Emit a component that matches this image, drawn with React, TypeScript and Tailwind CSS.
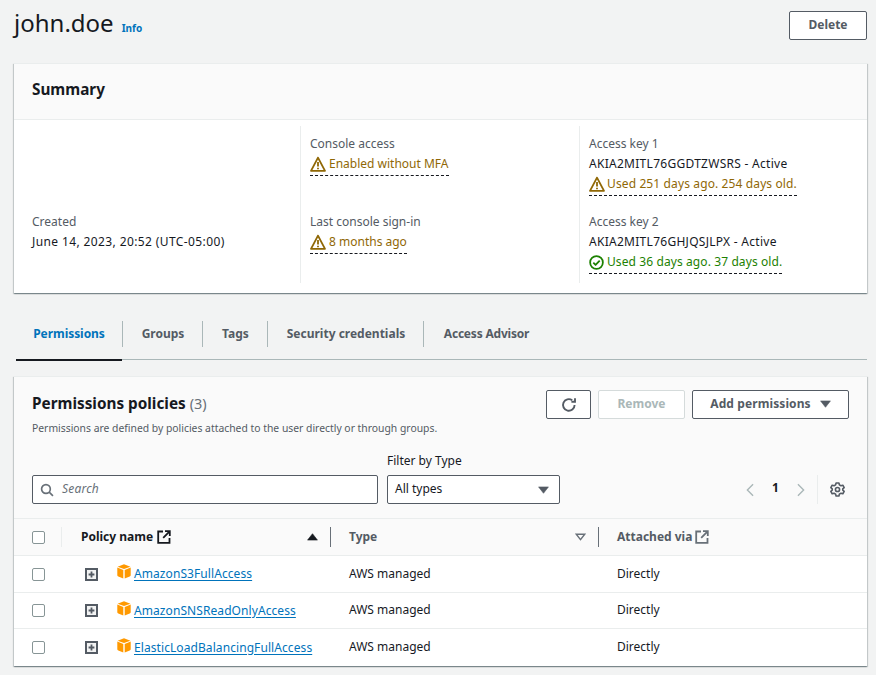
import React from "react";

const Warn = () => (
  <svg viewBox="0 0 16 16" className="w-[16px] h-[16px] shrink-0" fill="none" stroke="#906806" strokeWidth="1.8" strokeLinejoin="round">
    <path d="M8 1.6 1 14.8h14L8 1.6Z" />
    <path d="M8 6v4.4" />
    <path d="M7.1 12.4h1.8" strokeWidth="1.5" />
  </svg>
);

const Ok = () => (
  <svg viewBox="0 0 16 16" className="w-[15px] h-[15px] shrink-0" fill="none" stroke="#1d8102" strokeWidth="1.9">
    <circle cx="8" cy="8" r="6.8" />
    <path d="M4.6 8.2 7 10.6l4.4-4.6" strokeLinejoin="round" />
  </svg>
);

const External = ({ color }: { color: string }) => (
  <svg viewBox="0 0 14 14" className="w-[14px] h-[14px] shrink-0" fill="none" stroke={color} strokeWidth="1.8">
    <path d="M6 1.5H1.2v11.3h11.3V8" />
    <path d="M8 1.2h4.8V6M12.6 1.4 6.2 7.8" />
  </svg>
);

const Cube = () => (
  <svg viewBox="0 0 14 15" className="w-[14px] h-[15px] shrink-0">
    <path d="M7 .3 13.4 2.7 7 5.1.6 2.7 7 .3Z" fill="#ff9900" />
    <path d="M.3 3.6 6.3 5.9v8.6L1.3 12.5A1.4 1.4 0 0 1 .3 11.2V3.6Z" fill="#ff9900" />
    <path d="M13.7 3.6 7.7 5.9v8.6l5-2a1.4 1.4 0 0 0 1-1.3V3.6Z" fill="#ff9900" />
  </svg>
);

const Expand = () => (
  <svg viewBox="0 0 13 13" className="w-[13px] h-[13px] shrink-0">
    <rect x="1" y="1" width="11" height="11" fill="#f2f3f3" stroke="#545b64" strokeWidth="2" />
    <path d="M6.5 3.6v5.8M3.6 6.5h5.8" stroke="#545b64" strokeWidth="1.8" />
  </svg>
);

const Check = () => <span className="block w-[13px] h-[13px] rounded-[2px] border border-[#879596] bg-white" />;

const Caret = ({ color = "#545b64", up = false }: { color?: string; up?: boolean }) => (
  <svg viewBox="0 0 12 8" className="w-[11px] h-[8px] shrink-0">
    <path d={up ? "M.6 7.4h10.8L6 .4.6 7.4Z" : "M.6.6h10.8L6 7.6.6.6Z"} fill={color} stroke={color} strokeWidth="0.6" strokeLinejoin="round" />
  </svg>
);

const Stat = ({ label, children }: { label: string; children: React.ReactNode }) => (
  <div className="h-[78px]">
    <div className="text-[#545b64] leading-[20px]">{label}</div>
    {children}
  </div>
);

const Dashed = ({ tone, gap = "gap-[3px]", children }: { tone: string; gap?: string; children: React.ReactNode }) => (
  <div className={`inline-flex items-center ${gap} h-[22px] pb-[1px] leading-[20px] border-b border-dashed border-[#16191f] ${tone}`}>{children}</div>
);

const tabs = [
  { t: "Groups", w: "w-[80px] pl-[1px]" },
  { t: "Tags", w: "w-[65px] pl-[1px]" },
  { t: "Security credentials", w: "w-[156px] pl-[1px]" },
  { t: "Access Advisor", w: "w-[126px] tracking-[-0.2px]" },
];
const rows = [
  { n: "AmazonS3FullAccess", h: "h-[37px] border-b border-[#eaeded]" },
  { n: "AmazonSNSReadOnlyAccess", h: "h-[36px] border-b border-[#eaeded]" },
  { n: "ElasticLoadBalancingFullAccess", h: "h-[37px]" },
];

export default function App() {
  return (
    <div className="w-[876px] h-[675px] overflow-hidden bg-[#f2f3f3] pt-[11px] pl-[14px] pr-[9px] text-[12px] text-[#16191f] font-['Noto_Sans','Open_Sans',sans-serif]">
      <div className="flex items-start justify-between h-[29px] mb-[23px]">
        <div className="flex items-baseline gap-[8px] -mt-[3px]">
          <h1 className="text-[24px] leading-[29px] font-normal">john.doe</h1>
          <a className="text-[10px] font-bold text-[#0073bb]">Info</a>
        </div>
        <button className="w-[78px] h-[29px] pb-[2px] bg-white border border-[#545b64] rounded-[2px] text-[#545b64] font-bold">Delete</button>
      </div>

      <section className="h-[230px] bg-white border-t border-[#eaeded] shadow-[0_1px_1px_0_rgba(0,28,36,0.3),1px_1px_1px_0_rgba(0,28,36,0.15),-1px_1px_1px_0_rgba(0,28,36,0.15)]">
        <div className="h-[56px] bg-[#fafafa] border-b border-[#eaeded] pl-[18px] pb-[4px] flex items-center">
          <h2 className="text-[15.3px] font-bold">Summary</h2>
        </div>
        <div className="grid grid-cols-[286px_279px_1fr] pt-[6px]">
          <div className="h-[157px] pl-[18px] pt-[86px]">
            <Stat label="Created"><div className="leading-[20px] tracking-[0.39px]">June 14, 2023, 20:52 (UTC-05:00)</div></Stat>
          </div>
          <div className="h-[157px] border-l border-[#eaeded] pl-[9px] pt-[8px]">
            <Stat label="Console access">
              <Dashed tone="text-[#906806]"><Warn />Enabled without MFA</Dashed>
            </Stat>
            <Stat label="Last console sign-in">
              <Dashed tone="text-[#906806]"><Warn />8 months ago</Dashed>
            </Stat>
          </div>
          <div className="h-[157px] border-l border-[#eaeded] pl-[9px] pt-[8px]">
            <Stat label="Access key 1">
              <div className="leading-[20px] tracking-[0.28px]">AKIA2MITL76GGDTZWSRS - Active</div>
              <Dashed tone="text-[#906806] tracking-[0.12px]" gap="gap-[2px]"><Warn />Used 251 days ago. 254 days old.</Dashed>
            </Stat>
            <Stat label="Access key 2">
              <div className="leading-[20px] tracking-[0.28px]">AKIA2MITL76GHJQSJLPX - Active</div>
              <Dashed tone="text-[#1d8102] tracking-[0.1px]"><Ok />Used 36 days ago. 37 days old.</Dashed>
            </Stat>
          </div>
        </div>
      </section>

      <nav className="mt-[28px] ml-[2px] h-[39px] flex border-b border-[#aab7b8]">
        <div className="relative w-[106px] h-[39px] pb-[13px] flex items-center justify-center font-bold text-[#0073bb] tracking-[-0.05px]">
          Permissions
          <span className="absolute left-0 right-0 bottom-[-1px] h-[2px] bg-[#16191f]" />
        </div>
        {tabs.map(({ t, w }) => (
          <div key={t} className={`${w} h-[26px] border-l border-[#aab7b8] flex items-center justify-center font-bold text-[#545b64]`}>{t}</div>
        ))}
      </nav>

      <section className="mt-[16px] bg-white border-t border-[#eaeded] shadow-[0_1px_1px_0_rgba(0,28,36,0.3),1px_1px_1px_0_rgba(0,28,36,0.15),-1px_1px_1px_0_rgba(0,28,36,0.15)]">
        <div className="h-[142px] bg-[#fafafa] border-b border-[#eaeded] pl-[18px] pr-[18px] pt-[13px]">
          <div className="flex items-start justify-between h-[29px]">
            <div className="pt-[2px] text-[15.3px] leading-[22px]"><span className="font-bold">Permissions policies</span> <span className="text-[#687078] text-[14.5px]">(3)</span></div>
            <div className="flex gap-[7px]">
              <button className="w-[45px] h-[29px] bg-white border border-[#545b64] rounded-[2px] flex items-center justify-center">
                <svg viewBox="0 0 16 16" className="w-[16px] h-[16px]" fill="none" stroke="#545b64" strokeWidth="1.9">
                  <path d="M13.6 8A5.8 5.8 0 1 1 11.2 3.2" />
                  <path d="M14 1.2V4.8h-3.6" />
                </svg>
              </button>
              <button className="w-[87px] h-[29px] pb-[2px] bg-white border border-[#d5dbdb] rounded-[2px] text-[#aab7b8] font-bold">Remove</button>
              <button className="w-[157px] h-[29px] pb-[1px] bg-white border border-[#545b64] rounded-[2px] text-[#545b64] font-bold tracking-[0.1px] flex items-center justify-center gap-[9px]">Add permissions <Caret /></button>
            </div>
          </div>
          <p className="text-[10.37px] leading-[14px] text-[#545b64] mt-[2px]">Permissions are defined by policies attached to the user directly or through groups.</p>
          <div className="flex items-end mt-[16px]">
            <label className="w-[346px] h-[29px] bg-white border border-[#545b64] rounded-[2px] flex items-center pl-[7px] gap-[8px]">
              <svg viewBox="0 0 16 16" className="w-[14px] h-[14px]" fill="none" stroke="#687078" strokeWidth="1.9">
                <circle cx="6.8" cy="6.8" r="5" /><path d="m10.5 10.5 4.3 4.3" />
              </svg>
              <span className="italic text-[#687078] -mt-[1px] tracking-[0.2px]">Search</span>
            </label>
            <div className="ml-[9px]">
              <div className="leading-[20px] mb-[4px]">Filter by Type</div>
              <div className="w-[173px] h-[29px] bg-white border border-[#545b64] rounded-[2px] flex items-center justify-between pl-[7px] pr-[10px]">
                <span className="-mt-[1px]">All types</span><Caret />
              </div>
            </div>
            <div className="ml-auto h-[29px] flex items-center">
              <svg viewBox="0 0 10 16" className="w-[10px] h-[14px]" fill="none" stroke="#aab7b8" strokeWidth="1.6"><path d="M8.5 1.5 2 8l6.5 6.5" /></svg>
              <span className="w-[41px] text-center font-bold -mt-[3px]">1</span>
              <svg viewBox="0 0 10 16" className="w-[10px] h-[14px]" fill="none" stroke="#aab7b8" strokeWidth="1.6"><path d="M1.5 1.5 8 8l-6.5 6.5" /></svg>
              <span className="ml-[11px] mr-[12px] w-px h-[29px] bg-[#eaeded]" />
              <svg viewBox="0 0 16 16" className="w-[15px] h-[15px] mr-[4px]" fill="none" stroke="#545b64" strokeWidth="1.7">
                <path d="M6.5 1h3l.5 2 1.7 1 2-.6 1.4 2.6-1.5 1.4v1.2l1.5 1.4-1.4 2.6-2-.6-1.7 1-.5 2h-3l-.5-2-1.7-1-2 .6L.9 10l1.5-1.4V7.4L.9 6l1.4-2.6 2 .6L6 3l.5-2Z" strokeLinejoin="round" />
                <circle cx="8" cy="8" r="2.2" />
              </svg>
            </div>
          </div>
        </div>

        <div className="h-[37px] bg-[#fafafa] border-b border-[#eaeded] flex items-center font-bold">
          <div className="w-[48px] h-[20px] border-r border-[#eaeded] flex items-center pl-[18px]"><Check /></div>
          <div className="w-[269px] h-[20px] border-r border-[#687078] flex items-center justify-between pl-[19px] pr-[12px]">
            <span className="flex items-center gap-[4px] -mt-[1px]">Policy name <External color="#16191f" /></span>
            <Caret color="#16191f" up />
          </div>
          <div className="w-[268px] h-[20px] border-r border-[#687078] flex items-center justify-between pl-[18px] pr-[12px] text-[#545b64]">
            <span>Type</span>
            <svg viewBox="0 0 12 8" className="w-[11px] h-[8px]" fill="none" stroke="#687078" strokeWidth="1.5"><path d="M1.4 1h9.2L6 6.8 1.4 1Z" /></svg>
          </div>
          <span className="pl-[18px] flex items-center gap-[3px] text-[#545b64] -mt-[1px]">Attached via <External color="#687078" /></span>
        </div>

        {rows.map(({ n, h }) => (
          <div key={n} className={`${h} flex items-center`}>
            <div className="w-[48px] pl-[18px]"><Check /></div>
            <div className="w-[269px] flex items-center pl-[23px]">
              <Expand />
              <span className="ml-[19px] mr-[3px] -mt-[5px]"><Cube /></span>
              <a className="text-[#0073bb] underline decoration-[#0073bb] underline-offset-[2px] tracking-[0.08px]">{n}</a>
            </div>
            <div className="w-[268px] pl-[18px] -mt-[1px]">AWS managed</div>
            <div className="pl-[18px] -mt-[1px]">Directly</div>
          </div>
        ))}
      </section>
    </div>
  );
}
